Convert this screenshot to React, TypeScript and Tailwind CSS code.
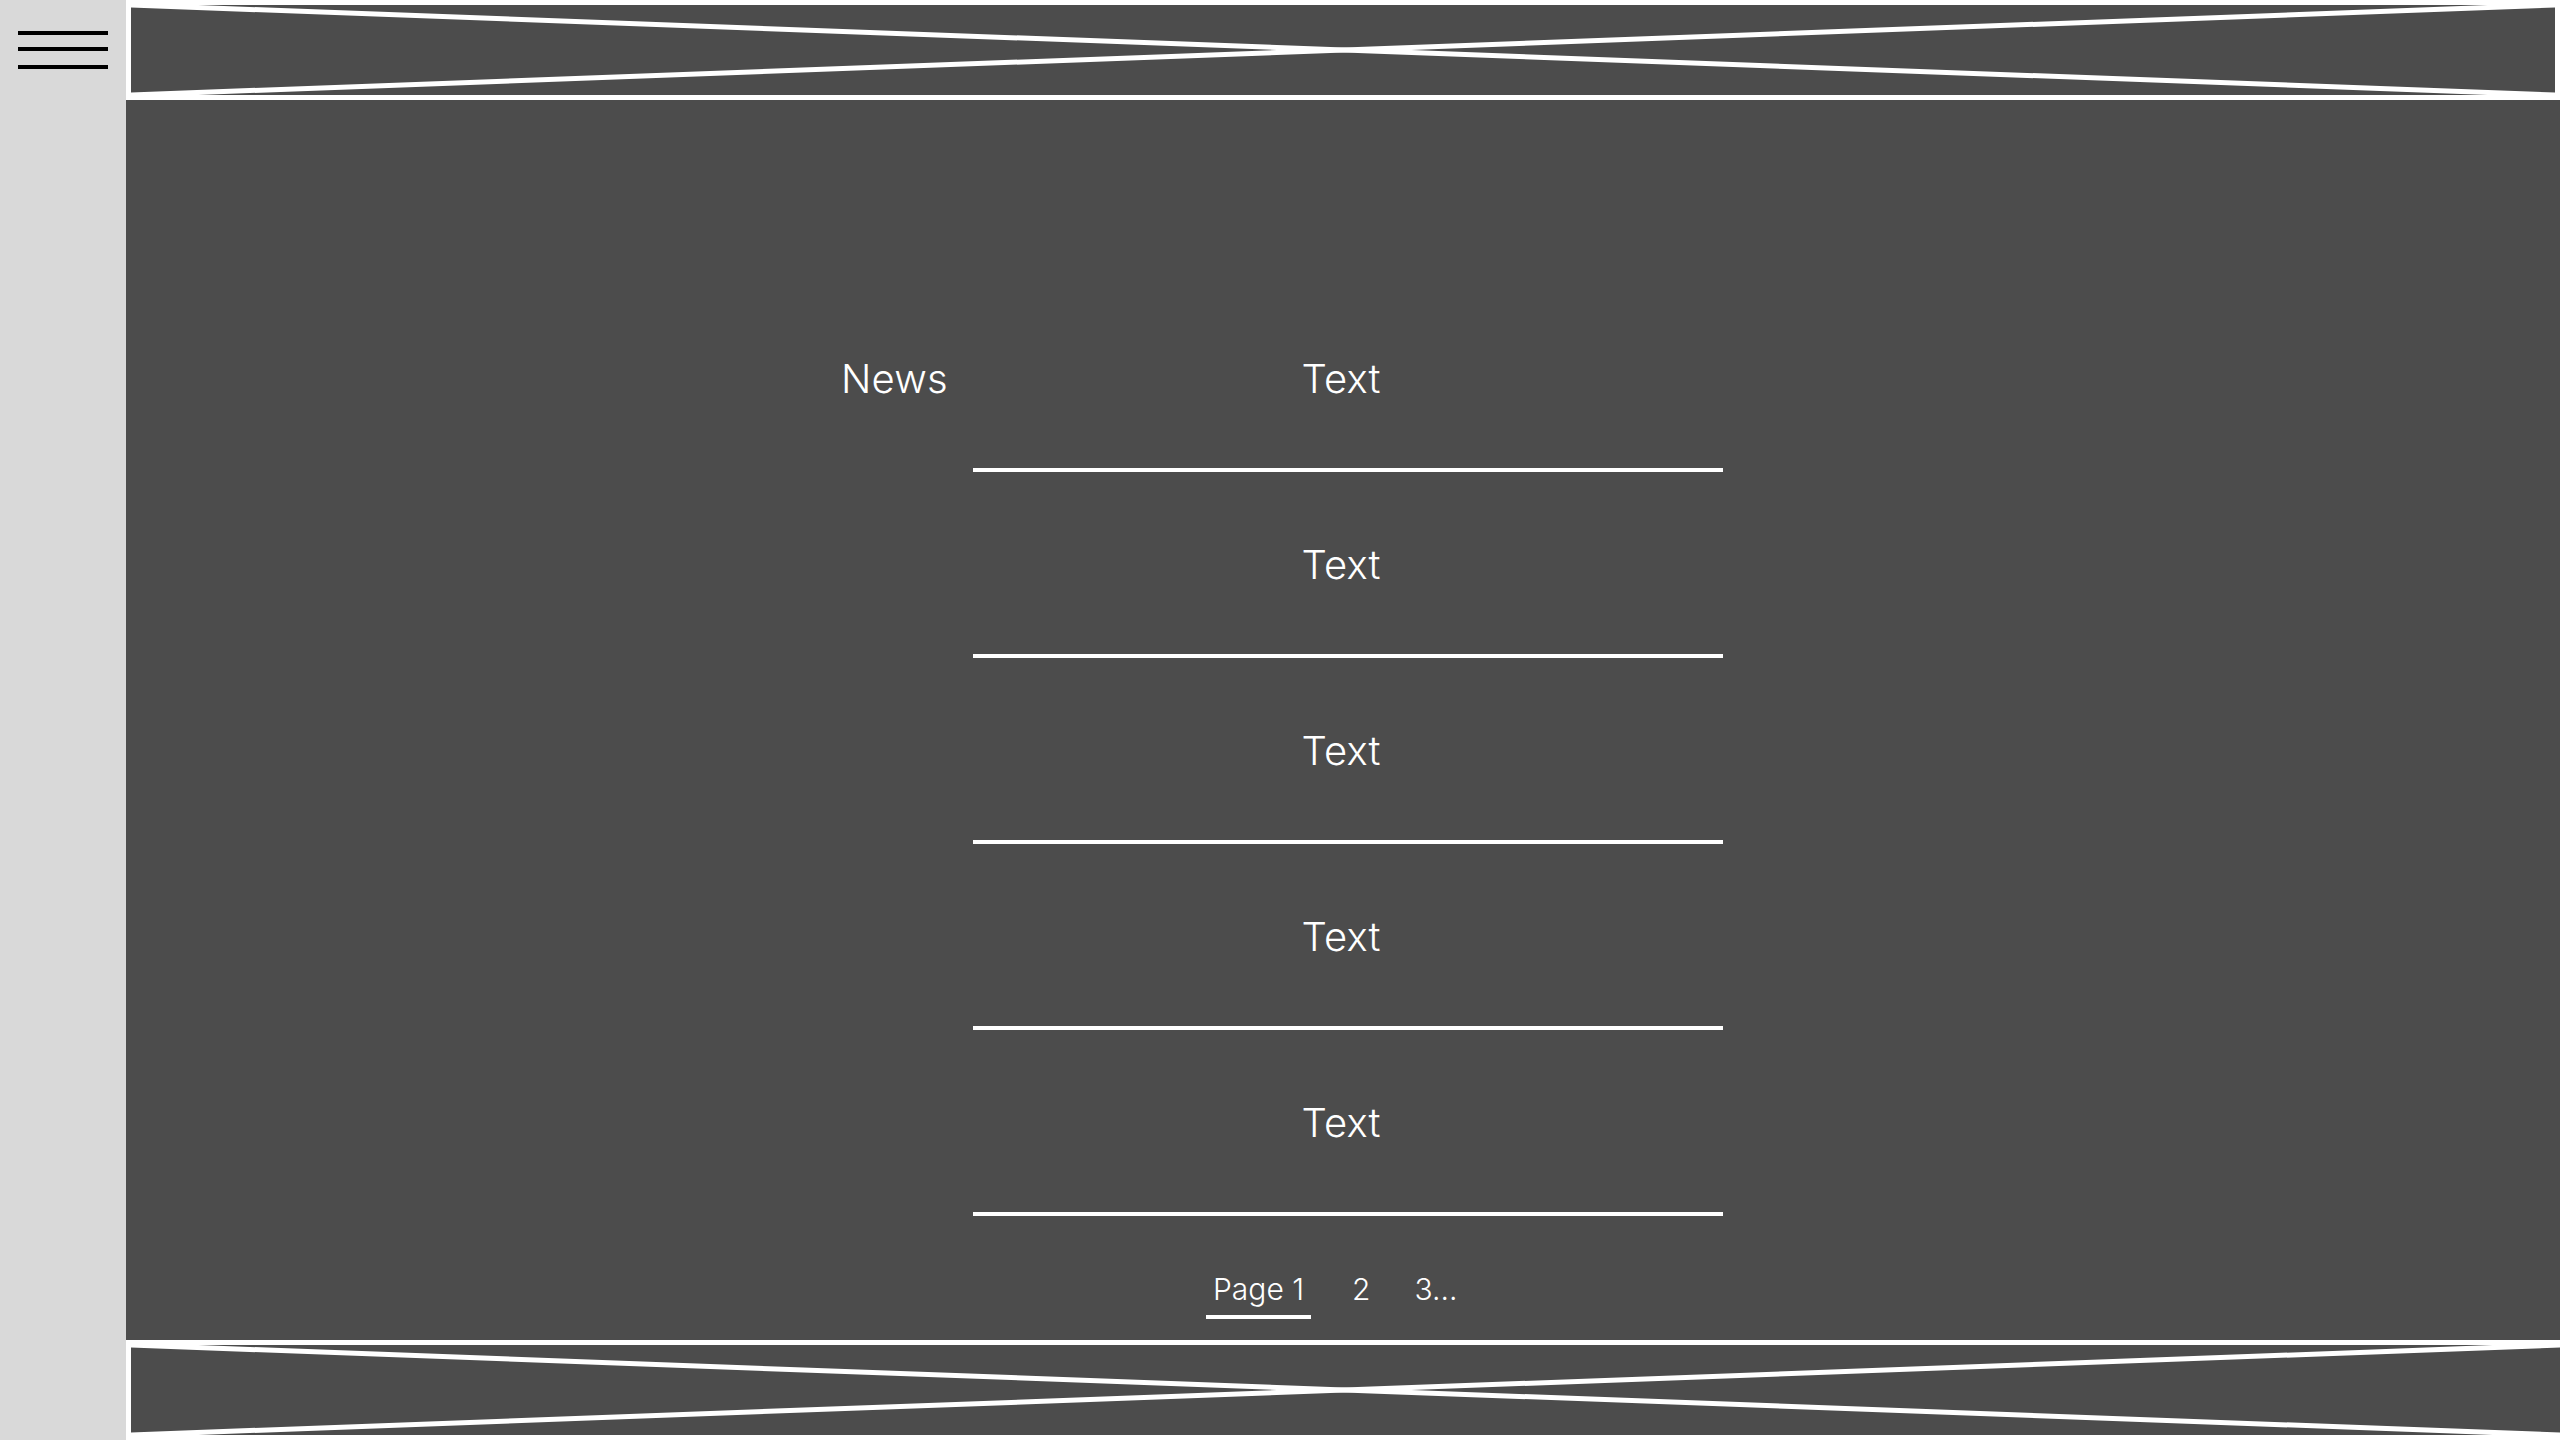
import React from 'react';

const dark = 'bg-[#4c4c4c]';

function Placeholder({ className }: { className: string }) {
    return (
        <div className={`relative h-[100px] shrink-0 border-white ${dark} ${className}`}>
            <svg className="absolute inset-0 w-full h-full" viewBox="0 0 100 100" preserveAspectRatio="none">
                <line x1="0" y1="0" x2="100" y2="100" stroke="white" strokeWidth="5" vectorEffect="non-scaling-stroke" />
                <line x1="0" y1="100" x2="100" y2="0" stroke="white" strokeWidth="5" vectorEffect="non-scaling-stroke" />
            </svg>
        </div>
    );
}

export default function App() {
    const rows = ['Text', 'Text', 'Text', 'Text', 'Text'];

    return (
        <div className="flex h-[1440px] w-full overflow-hidden text-white" style={{ fontFamily: 'Inter, "Noto Sans", sans-serif' }}>
            {/* Side rail */}
            <aside className="w-[126px] shrink-0 bg-[#d9d9d9] pl-[18px] pt-[31px]">
                <div className="w-[90px] h-[4px] bg-black" />
                <div className="w-[90px] h-[4px] bg-black mt-[12px]" />
                <div className="w-[90px] h-[4px] bg-black mt-[14px]" />
            </aside>

            <div className="flex-1 flex flex-col min-w-0">
                <Placeholder className="border-[5px]" />

                <main className={`flex-1 ${dark} flex pl-[715px] pt-[255px]`}>
                    <div className="w-[132px] text-[40px] leading-[48px] font-light tracking-[0.2px]">News</div>

                    <div className="w-[750px]">
                        {rows.map((r, i) => (
                            <div key={i} className={i === 0 ? '' : 'mt-[69px]'}>
                                <div className="text-center text-[40px] leading-[48px] font-light tracking-[0.2px] pr-[14px]">{r}</div>
                                <div className="mt-[65px] h-[4px] bg-white" />
                            </div>
                        ))}

                        <div className="mt-[55px] pl-[233px] flex items-start text-[30px] leading-[36px] font-light">
                            <span className="px-[7px] pb-[8px] border-b-[4px] border-white">Page 1</span>
                            <span className="ml-[41px]">2</span>
                            <span className="ml-[44px]">3...</span>
                        </div>
                    </div>
                </main>

                <Placeholder className="border-t-[5px] border-l-[5px] border-b-[5px]" />
            </div>
        </div>
    );
}
